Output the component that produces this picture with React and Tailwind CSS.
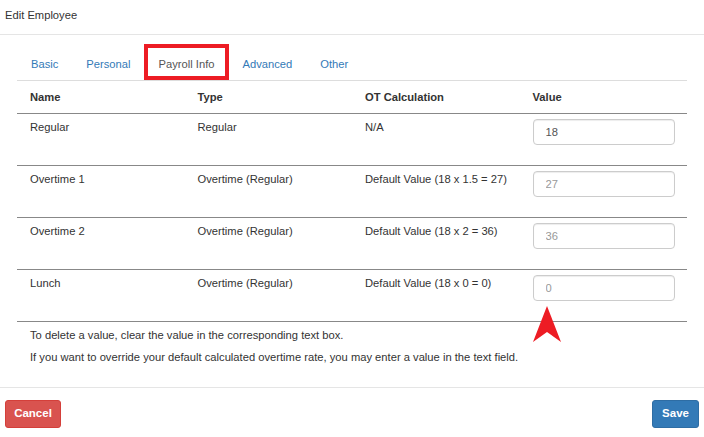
import React from 'react';

const tabs = ['Basic', 'Personal', 'Payroll Info', 'Advanced', 'Other'];

const rows = [
  { name: 'Regular', type: 'Regular', ot: 'N/A', value: '18', placeholder: '' },
  { name: 'Overtime 1', type: 'Overtime (Regular)', ot: 'Default Value (18 x 1.5 = 27)', value: '', placeholder: '27' },
  { name: 'Overtime 2', type: 'Overtime (Regular)', ot: 'Default Value (18 x 2 = 36)', value: '', placeholder: '36' },
  { name: 'Lunch', type: 'Overtime (Regular)', ot: 'Default Value (18 x 0 = 0)', value: '', placeholder: '0' },
];

const App = () => {
  return (
    <div className="relative w-[704px] h-[437px] bg-white text-[11.2px] text-[#333] font-['Liberation_Sans',Arial,sans-serif] overflow-hidden">
      <div className="h-[35px] pl-[5px] pt-[8px] leading-[14px] border-b border-[#e5e5e5]">Edit Employee</div>

      <div className="px-[17px]">
        <ul className="flex mt-[12px] border-b border-[#ddd]">
          {tabs.map((t) => (
            <li key={t} className="relative">
              <span className={`block px-[14px] pt-[10px] pb-[9px] leading-[14px] ${t === 'Payroll Info' ? 'text-[#555]' : 'text-[#337ab7]'}`}>
                {t}
              </span>
              {t === 'Payroll Info' && (
                <span className="absolute left-[-1px] right-[-1px] top-[-3px] bottom-[0px] border-4 border-[#ed1c24]" />
              )}
            </li>
          ))}
        </ul>

        <div className="grid grid-cols-4 h-[33px] items-center font-bold border-b border-[#888]">
          <div className="pl-[13px]">Name</div>
          <div className="pl-[13px]">Type</div>
          <div className="pl-[13px]">OT Calculation</div>
          <div className="pl-[13px]">Value</div>
        </div>

        {rows.map((r) => (
          <div key={r.name} className="grid grid-cols-4 h-[52px] border-b border-[#888]">
            <div className="pl-[13px] pt-[6px] leading-[14px]">{r.name}</div>
            <div className="pl-[13px] pt-[6px] leading-[14px]">{r.type}</div>
            <div className="pl-[13px] pt-[6px] leading-[14px]">{r.ot}</div>
            <div className="pl-[13px] pt-[5px]">
              <input
                type="text"
                defaultValue={r.value}
                placeholder={r.placeholder}
                className="w-[142px] h-[26px] px-[12px] border border-[#ccc] rounded-[4px] text-[11.2px] text-[#555] placeholder:text-[#999] outline-none shadow-[inset_0_1px_1px_rgba(0,0,0,0.075)]"
              />
            </div>
          </div>
        ))}

        <div className="pl-[13px] pt-[6px] leading-[14px]">
          <p>To delete a value, clear the value in the corresponding text box.</p>
          <p className="mt-[8px]">If you want to override your default calculated overtime rate, you may enter a value in the text field.</p>
        </div>
      </div>

      <div className="absolute left-0 right-0 top-[387px] border-t border-[#e5e5e5] flex justify-between px-[5px] pt-[12px]">
        <button className="h-[28px] w-[56px] rounded-[3px] bg-[#d9534f] border border-[#d43f3a] text-white font-bold text-[11.5px]">Cancel</button>
        <button className="h-[28px] w-[47px] rounded-[3px] bg-[#337ab7] border border-[#2e6da4] text-white font-bold text-[11.5px]">Save</button>
      </div>

      <svg className="absolute left-[532px] top-[305px]" width="30" height="38" viewBox="0 0 30 38">
        <polygon points="15,1 29,37 15,27 1,37" fill="#ed1c24" />
      </svg>
    </div>
  );
};

export default App;
